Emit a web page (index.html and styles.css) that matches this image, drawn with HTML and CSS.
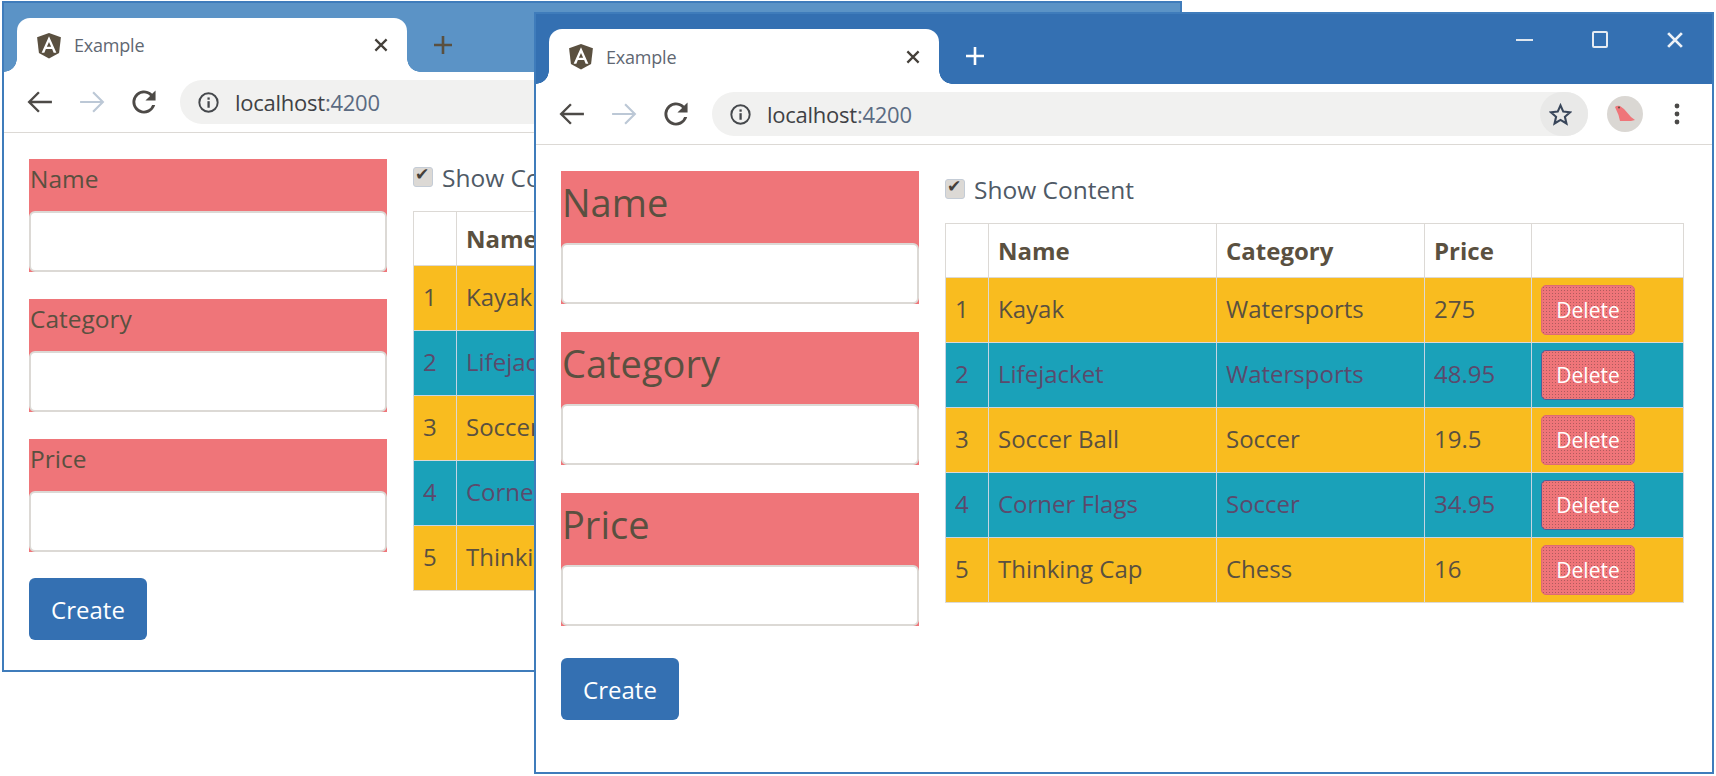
FILE: index.html
```html
<!DOCTYPE html>
<html>
<head>
    <title>Example</title>
    <link rel="stylesheet" href="styles.css">
</head>
<body>
    <svg class="sprite" width="0" height="0">
        <symbol id="ng" viewBox="0 0 24 24">
            <path fill="#5a5040" d="M12 0.5 L23 4.4 L21.3 18.9 L12 24 L2.7 18.9 L1 4.4Z"/>
            <path fill="#fff" fill-rule="evenodd" d="M12 3.4 L5.2 18.6 H7.7 L9.1 15.2 H14.9 L16.3 18.6 H18.8Z M12 8.8 L14 13.2 H10Z"/>
        </symbol>
        <symbol id="close" viewBox="0 0 16 16">
            <path d="M3 3 L13 13 M13 3 L3 13" fill="none" stroke="currentColor" stroke-width="2"/>
        </symbol>
        <symbol id="plus" viewBox="0 0 20 20">
            <path d="M10 1 V19 M1 10 H19" fill="none" stroke="currentColor" stroke-width="2.6"/>
        </symbol>
        <symbol id="back" viewBox="0 0 24 24">
            <path d="M23 12 H2 M11 3 L2 12 L11 21" fill="none" stroke="currentColor" stroke-width="2.2"/>
        </symbol>
        <symbol id="forward" viewBox="0 0 24 24">
            <path d="M1 12 H22 M13 3 L22 12 L13 21" fill="none" stroke="currentColor" stroke-width="2"/>
        </symbol>
        <symbol id="reload" viewBox="3 3 18 18">
            <path fill="currentColor" d="M17.65 6.35A8 8 0 1 0 19.73 14h-2.08A6 6 0 1 1 12 6c1.66 0 3.14.69 4.22 1.78L13 11h7V4l-2.35 2.35z"/>
        </symbol>
        <symbol id="info" viewBox="0 0 24 24">
            <circle cx="12" cy="12" r="10.5" fill="none" stroke="currentColor" stroke-width="2.2"/>
            <rect x="10.8" y="10.5" width="2.6" height="7.5" fill="currentColor"/>
            <rect x="10.8" y="6.2" width="2.6" height="2.6" fill="currentColor"/>
        </symbol>
        <symbol id="star" viewBox="0 0 24 24">
            <path d="M12 2.5 L14.9 9 L22 9.7 L16.6 14.4 L18.2 21.4 L12 17.7 L5.8 21.4 L7.4 14.4 L2 9.7 L9.1 9Z" fill="none" stroke="currentColor" stroke-width="2.2"/>
        </symbol>
        <symbol id="bird" viewBox="0 0 36 36">
            <circle cx="18" cy="18" r="18" fill="#dad7d3"/>
            <path fill="#ef7579" d="M8 11 Q10 9 13 10 L17 13 L24 21 L28 24 L24 25 H13 L11.5 19 Z"/>
            <circle cx="12" cy="11.5" r="1" fill="#5a5040"/>
        </symbol>
        <symbol id="dots" viewBox="0 0 6 24">
            <circle cx="3" cy="4" r="2.4" fill="currentColor"/>
            <circle cx="3" cy="12" r="2.4" fill="currentColor"/>
            <circle cx="3" cy="20" r="2.4" fill="currentColor"/>
        </symbol>
    </svg>

    <div class="window window-back">
        <div class="titlebar">
            <div class="tab">
                <svg class="tab-logo"><use href="#ng"/></svg>
                <span class="tab-title">Example</span>
                <svg class="tab-close"><use href="#close"/></svg>
            </div>
            <svg class="new-tab"><use href="#plus"/></svg>
        </div>
        <div class="toolbar">
            <span class="nav-btn"><svg class="nav-icon"><use href="#back"/></svg></span>
            <span class="nav-btn nav-off"><svg class="nav-icon"><use href="#forward"/></svg></span>
            <span class="nav-btn"><svg class="nav-icon"><use href="#reload"/></svg></span>
            <div class="address">
                <svg class="info-icon"><use href="#info"/></svg>
                <span class="url">localhost<span class="url-port">:4200</span></span>
            </div>
        </div>
        <div class="content">
            <form class="product-form">
                <div class="form-group"><label>Name</label><input class="form-input" type="text"></div>
                <div class="form-group"><label>Category</label><input class="form-input" type="text"></div>
                <div class="form-group"><label>Price</label><input class="form-input" type="text"></div>
                <button class="btn-create" type="button">Create</button>
            </form>
            <div class="products">
                <label class="show-row"><input class="show-check" type="checkbox" checked> Show Content</label>
                <table class="product-table">
                    <thead>
                        <tr><th class="col-id"></th><th class="col-name">Name</th></tr>
                    </thead>
                    <tbody>
                        <tr class="row-warning"><td>1</td><td>Kayak</td></tr>
                        <tr class="row-info"><td>2</td><td>Lifejacket</td></tr>
                        <tr class="row-warning"><td>3</td><td>Soccer Ball</td></tr>
                        <tr class="row-info"><td>4</td><td>Corner Flags</td></tr>
                        <tr class="row-warning"><td>5</td><td>Thinking Cap</td></tr>
                    </tbody>
                </table>
            </div>
        </div>
    </div>

    <div class="window window-front">
        <div class="titlebar">
            <div class="tab">
                <svg class="tab-logo"><use href="#ng"/></svg>
                <span class="tab-title">Example</span>
                <svg class="tab-close"><use href="#close"/></svg>
            </div>
            <svg class="new-tab"><use href="#plus"/></svg>
            <div class="win-controls">
                <span class="win-btn"><span class="win-min"></span></span>
                <span class="win-btn"><span class="win-max"></span></span>
                <span class="win-btn"><svg class="win-close"><use href="#close"/></svg></span>
            </div>
        </div>
        <div class="toolbar">
            <span class="nav-btn"><svg class="nav-icon"><use href="#back"/></svg></span>
            <span class="nav-btn nav-off"><svg class="nav-icon"><use href="#forward"/></svg></span>
            <span class="nav-btn"><svg class="nav-icon"><use href="#reload"/></svg></span>
            <div class="address">
                <svg class="info-icon"><use href="#info"/></svg>
                <span class="url">localhost<span class="url-port">:4200</span></span>
                <span class="star-btn"><svg class="star-icon"><use href="#star"/></svg></span>
            </div>
            <svg class="avatar"><use href="#bird"/></svg>
            <svg class="menu-dots"><use href="#dots"/></svg>
        </div>
        <div class="content">
            <form class="product-form">
                <div class="form-group"><label>Name</label><input class="form-input" type="text"></div>
                <div class="form-group"><label>Category</label><input class="form-input" type="text"></div>
                <div class="form-group"><label>Price</label><input class="form-input" type="text"></div>
                <button class="btn-create" type="button">Create</button>
            </form>
            <div class="products">
                <label class="show-row"><input class="show-check" type="checkbox" checked> Show Content</label>
                <table class="product-table">
                    <thead>
                        <tr>
                            <th class="col-id"></th>
                            <th class="col-name">Name</th>
                            <th class="col-cat">Category</th>
                            <th class="col-price">Price</th>
                            <th class="col-action"></th>
                        </tr>
                    </thead>
                    <tbody>
                        <tr class="row-warning">
                            <td>1</td><td>Kayak</td><td>Watersports</td><td>275</td>
                            <td class="cell-action"><button class="btn-delete" type="button">Delete</button></td>
                        </tr>
                        <tr class="row-info">
                            <td>2</td><td>Lifejacket</td><td>Watersports</td><td>48.95</td>
                            <td class="cell-action"><button class="btn-delete" type="button">Delete</button></td>
                        </tr>
                        <tr class="row-warning">
                            <td>3</td><td>Soccer Ball</td><td>Soccer</td><td>19.5</td>
                            <td class="cell-action"><button class="btn-delete" type="button">Delete</button></td>
                        </tr>
                        <tr class="row-info">
                            <td>4</td><td>Corner Flags</td><td>Soccer</td><td>34.95</td>
                            <td class="cell-action"><button class="btn-delete" type="button">Delete</button></td>
                        </tr>
                        <tr class="row-warning">
                            <td>5</td><td>Thinking Cap</td><td>Chess</td><td>16</td>
                            <td class="cell-action"><button class="btn-delete" type="button">Delete</button></td>
                        </tr>
                    </tbody>
                </table>
            </div>
        </div>
    </div>
</body>
</html>
```

FILE: styles.css
```css
* {
    box-sizing: border-box;
}
body {
    margin: 0;
    height: 776px;
    overflow: hidden;
    background: #fff;
    font-family: "Open Sans", "Noto Sans", sans-serif;
    color: #5a5040;
}
.sprite {
    position: absolute;
}

/* windows sit on a free canvas, the front one covers most of the back one */
.window {
    position: absolute;
    width: 1180px;
    display: flex;
    flex-direction: column;
    background: #fff;
    border: 2px solid #3f7cbb;
}
.window-back {
    left: 2px;
    top: 1px;
    height: 671px;
}
.window-front {
    left: 534px;
    top: 12px;
    height: 762px;
}

.titlebar {
    display: flex;
    height: 70px;
    padding: 15px 0 0 13px;
    background: #3470b2;
    color: #fff;
    flex-shrink: 0;
}
.window-back .titlebar {
    height: 69px;
    background: #5b93c6;
    color: #5a5040;
}
.tab {
    position: relative;
    display: flex;
    align-items: center;
    width: 390px;
    padding: 0 0 0 19px;
    background: #fff;
    border-radius: 13px 13px 0 0;
}
.tab::before,
.tab::after {
    content: "";
    position: absolute;
    bottom: 0;
    width: 13px;
    height: 13px;
}
.tab::before {
    left: -13px;
    background: radial-gradient(circle at 0 0, transparent 12.5px, #fff 13px);
}
.tab::after {
    right: -13px;
    background: radial-gradient(circle at 100% 0, transparent 12.5px, #fff 13px);
}
.tab-logo {
    width: 26px;
    height: 27px;
}
.tab-title {
    margin-left: 12px;
    font-size: 18px;
    color: #5f6772;
    letter-spacing: -0.2px;
}
.tab-close {
    width: 18px;
    height: 18px;
    margin-left: auto;
    margin-right: 17px;
    color: #45403a;
}
.new-tab {
    width: 20px;
    height: 20px;
    margin: 17px 0 0 26px;
}

.win-controls {
    display: flex;
    margin-left: auto;
    height: 21px;
}
.win-btn {
    display: flex;
    width: 75px;
    align-items: center;
    justify-content: center;
}
.win-min {
    width: 17px;
    height: 2px;
    background: #dfe6ee;
}
.win-max {
    width: 16px;
    height: 17px;
    border: 2px solid #e6ebf2;
    border-radius: 2px;
}
.win-close {
    width: 22px;
    height: 22px;
    color: #eef2f7;
}

.toolbar {
    display: flex;
    align-items: center;
    height: 61px;
    padding: 0 32px 0 10px;
    border-bottom: 1px solid #dcd9d5;
    flex-shrink: 0;
}
.window-back .toolbar {
    padding-right: 0;
}
.nav-btn {
    display: flex;
    width: 52px;
    justify-content: center;
    color: #4d4a47;
}
.nav-off {
    color: #bcc8d6;
}
.nav-icon {
    width: 26px;
    height: 26px;
}
.address {
    display: flex;
    align-items: center;
    flex: 1;
    height: 44px;
    margin: 0 19px 0 10px;
    padding-left: 18px;
    background: #f1f1f0;
    border-radius: 22px;
}
.window-back .address {
    margin-right: 0;
}
.info-icon {
    width: 21px;
    height: 21px;
    color: #45484c;
}
.url {
    margin-left: 16px;
    font-size: 22px;
    color: #3f4145;
    letter-spacing: -0.25px;
}
.url-port {
    color: #5b6b82;
}
.star-btn {
    display: flex;
    align-items: center;
    justify-content: center;
    width: 48px;
    height: 44px;
    margin-left: auto;
    padding-right: 8px;
    background: #e9e9e8;
    border-radius: 22px;
}
.star-icon {
    width: 23px;
    height: 23px;
    color: #39465a;
}
.avatar {
    width: 36px;
    height: 36px;
}
.menu-dots {
    width: 6px;
    height: 24px;
    margin-left: 31px;
    color: #4b4a48;
}

.content {
    display: flex;
    gap: 26px;
    padding: 26px 28px 0 25px;
}
.product-form {
    width: 358px;
    flex-shrink: 0;
}
.form-group {
    margin-bottom: 27px;
    background: #ef7579;
}
.form-group label {
    display: block;
    padding: 2px 1px 14px;
    font-size: 24.5px;
    line-height: 36px;
}
.window-front .form-group {
    margin-bottom: 28px;
}
.window-front .form-group label {
    padding: 4px 1px 14px;
    font-size: 38px;
    line-height: 54px;
}
.form-input {
    display: block;
    width: 100%;
    height: 61px;
    background: #fff;
    border: 2px solid #dcd9d5;
    border-radius: 6px;
}
.btn-create {
    width: 118px;
    height: 62px;
    background: #3470b2;
    color: #fff;
    font-family: inherit;
    font-size: 24px;
    border: 0;
    border-radius: 6px;
}
.window-back .btn-create {
    margin-top: -1px;
}
.window-front .btn-create {
    margin-top: 4px;
}

/* the back window's table runs on under the front window */
.products {
    width: 739px;
    flex-shrink: 0;
}
.window-back .products {
    width: 122px;
    overflow: hidden;
}
.show-row {
    display: flex;
    align-items: center;
    height: 52px;
    padding-bottom: 16px;
    font-size: 24.5px;
    color: #4f5a66;
    white-space: nowrap;
}
.show-check {
    appearance: none;
    position: relative;
    width: 20px;
    height: 20px;
    margin: 0 9px 0 0;
    background: #dcd9d5;
    border: 1px solid #c4ccd6;
    border-radius: 3px;
    flex-shrink: 0;
}
.show-check::after {
    content: "\2714";
    position: absolute;
    left: 1px;
    top: -4px;
    font-family: "DejaVu Sans", sans-serif;
    font-size: 17px;
    color: #45403a;
}
.product-table {
    width: 739px;
    table-layout: fixed;
    border-collapse: collapse;
    font-size: 24px;
}
.window-back .product-table {
    width: 271px;
}
.product-table th,
.product-table td {
    padding: 0 9px;
    border: 1px solid #dcd9d5;
    text-align: left;
}
.product-table th {
    height: 54px;
    padding-bottom: 1px;
    font-weight: 700;
}
.product-table td {
    height: 65px;
    padding-bottom: 4px;
    white-space: nowrap;
}
.col-id {
    width: 43px;
}
.col-name {
    width: 228px;
}
.col-cat {
    width: 208px;
}
.col-price {
    width: 107px;
}
.row-warning td {
    background: #f9bc1f;
}
.row-info td {
    background: #1aa1b9;
    color: #5b4a6c;
    border-color: #c6d4e2;
}
.product-table .cell-action {
    padding: 0 9px;
}
.btn-delete {
    display: block;
    width: 94px;
    height: 50px;
    padding: 0;
    background-color: #ef7579;
    background-image: radial-gradient(circle, rgba(120, 70, 70, 0.55) 0.6px, transparent 0.9px);
    background-size: 3px 3px;
    color: #fff;
    font-family: inherit;
    font-size: 21px;
    border: 1px solid #dd6a72;
    border-radius: 5px;
}
.row-info .btn-delete {
    border-color: #4a5f98;
}
```
